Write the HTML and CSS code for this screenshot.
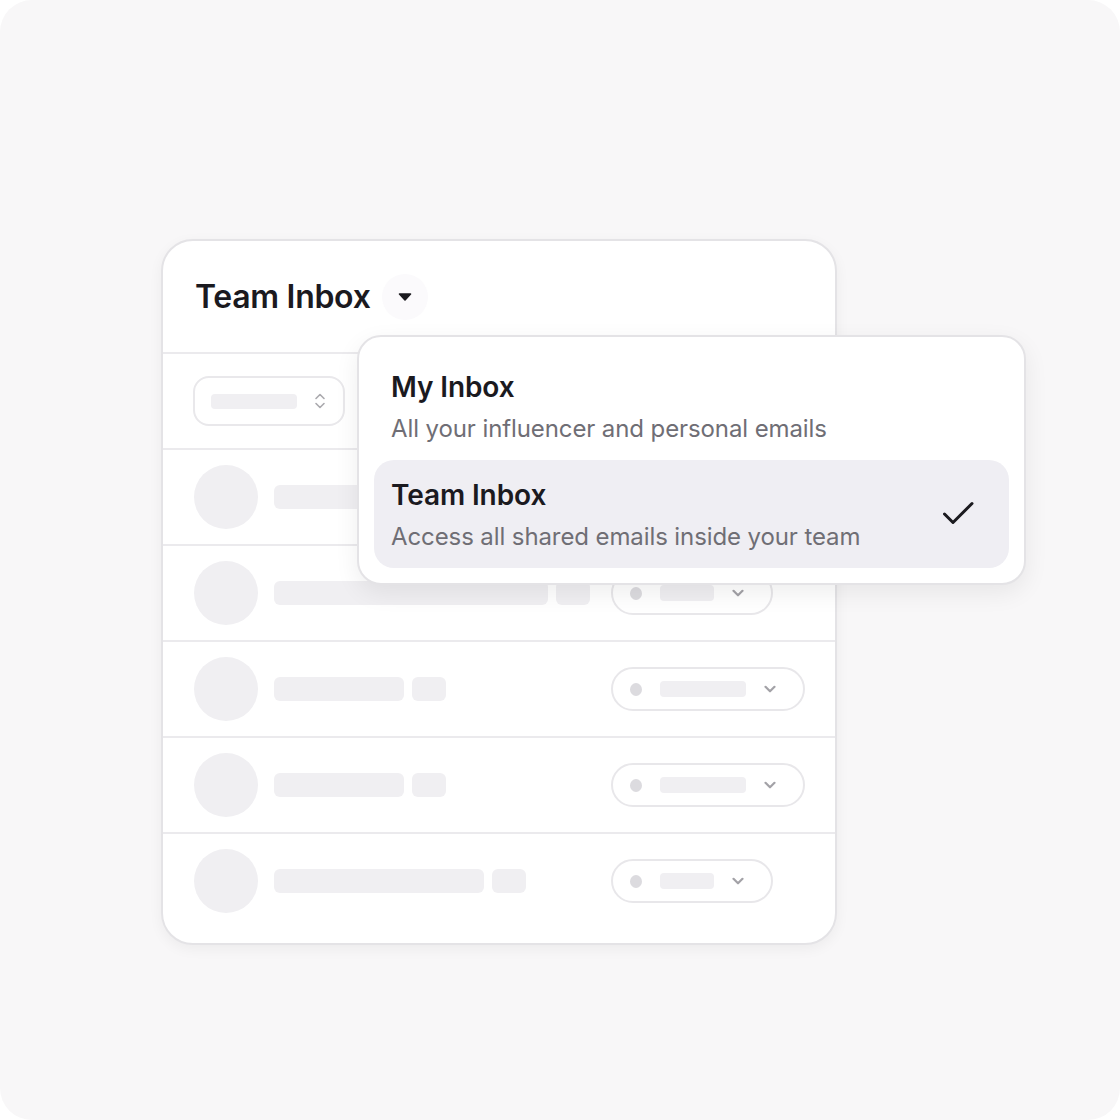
FILE: index.html
```html
<!DOCTYPE html>
<html lang="en">
<head>
  <meta charset="UTF-8">
  <title>Team Inbox</title>
  <link rel="stylesheet" href="styles.css">
</head>
<body>
  <div class="cornice">
    <div class="scheda">
      <div class="testata">
        <h1>Team Inbox</h1>
        <span class="apri">
          <svg width="16" height="10" viewBox="0 0 16 10"><path d="M2.5 2h11L8 8z" fill="#1b1a1f" stroke="#1b1a1f" stroke-width="1.6" stroke-linejoin="round"/></svg>
        </span>
      </div>

      <div class="filtri">
        <div class="selettore">
          <span class="barra-sel"></span>
          <svg width="14" height="20" viewBox="0 0 14 20"><path d="M3 7.5l4-4 4 4M3 12.5l4 4 4-4" fill="none" stroke="#aaa9ae" stroke-width="1.6" stroke-linecap="round" stroke-linejoin="round"/></svg>
        </div>
      </div>

      <div class="riga">
        <span class="avatar"></span>
        <span class="nome" style="width: 210px"></span>
        <span class="tag"></span>
        <div class="stato"><span class="punto"></span><span class="barra-stato" style="width: 54px"></span><svg class="freccia" width="12" height="8" viewBox="0 0 12 8"><path d="M1.5 1.8L6 6.3l4.5-4.5" fill="none" stroke="#a3a2a7" stroke-width="2.2" stroke-linecap="round" stroke-linejoin="round"/></svg></div>
      </div>
      <div class="riga">
        <span class="avatar"></span>
        <span class="nome" style="width: 274px"></span>
        <span class="tag"></span>
        <div class="stato"><span class="punto"></span><span class="barra-stato" style="width: 54px"></span><svg class="freccia" width="12" height="8" viewBox="0 0 12 8"><path d="M1.5 1.8L6 6.3l4.5-4.5" fill="none" stroke="#a3a2a7" stroke-width="2.2" stroke-linecap="round" stroke-linejoin="round"/></svg></div>
      </div>
      <div class="riga">
        <span class="avatar"></span>
        <span class="nome" style="width: 130px"></span>
        <span class="tag"></span>
        <div class="stato"><span class="punto"></span><span class="barra-stato" style="width: 86px"></span><svg class="freccia" width="12" height="8" viewBox="0 0 12 8"><path d="M1.5 1.8L6 6.3l4.5-4.5" fill="none" stroke="#a3a2a7" stroke-width="2.2" stroke-linecap="round" stroke-linejoin="round"/></svg></div>
      </div>
      <div class="riga">
        <span class="avatar"></span>
        <span class="nome" style="width: 130px"></span>
        <span class="tag"></span>
        <div class="stato"><span class="punto"></span><span class="barra-stato" style="width: 86px"></span><svg class="freccia" width="12" height="8" viewBox="0 0 12 8"><path d="M1.5 1.8L6 6.3l4.5-4.5" fill="none" stroke="#a3a2a7" stroke-width="2.2" stroke-linecap="round" stroke-linejoin="round"/></svg></div>
      </div>
      <div class="riga">
        <span class="avatar"></span>
        <span class="nome" style="width: 210px"></span>
        <span class="tag"></span>
        <div class="stato"><span class="punto"></span><span class="barra-stato" style="width: 54px"></span><svg class="freccia" width="12" height="8" viewBox="0 0 12 8"><path d="M1.5 1.8L6 6.3l4.5-4.5" fill="none" stroke="#a3a2a7" stroke-width="2.2" stroke-linecap="round" stroke-linejoin="round"/></svg></div>
      </div>

      <!-- menu aperto sopra la lista -->
      <div class="menu">
        <div class="voce">
          <div class="testi">
            <div class="titolo">My Inbox</div>
            <div class="sotto">All your influencer and personal emails</div>
          </div>
        </div>
        <div class="voce attiva">
          <div class="testi">
            <div class="titolo">Team Inbox</div>
            <div class="sotto">Access all shared emails inside your team</div>
          </div>
          <svg class="spunta" width="34" height="34" viewBox="0 0 34 34"><path d="M3.5 17l8.5 8.5L31 6.5" fill="none" stroke="#1b1a1f" stroke-width="3" stroke-linecap="round" stroke-linejoin="round"/></svg>
        </div>
      </div>
    </div>
  </div>
</body>
</html>
```

FILE: styles.css
```css
:root {
  --sfondo: #f8f7f8;
  --bordo: #e4e3e6;
  --linea: #ebeaed;
  --grigio: #f0eff2;
  --testo: #1b1a1f;
  --testoTenue: #6f6e75;
}

* {
  box-sizing: border-box;
  margin: 0;
  padding: 0;
}

body {
  background: #ffffff;
  font-family: 'Inter', 'Noto Sans', sans-serif;
  color: var(--testo);
}

.cornice {
  width: 1120px;
  height: 1120px;
  background: var(--sfondo);
  border-radius: 32px;
  padding: 239px 0 0 161px;
}

.scheda {
  position: relative;
  width: 676px;
  height: 706px;
  background: #fff;
  border: 2px solid var(--bordo);
  border-radius: 32px;
  box-shadow: 0 4px 14px rgba(0, 0, 0, 0.05);
}

.testata {
  height: 111px;
  display: flex;
  align-items: center;
  gap: 11px;
  padding-left: 32px;
}

.testata h1 {
  font-size: 32px;
  font-weight: 600;
  letter-spacing: -0.3px;
}

.apri {
  width: 46px;
  height: 46px;
  border-radius: 50%;
  background: #fbfafc;
  display: flex;
  align-items: center;
  justify-content: center;
}

.filtri {
  height: 96px;
  border-top: 2px solid var(--linea);
  display: flex;
  align-items: center;
  padding-left: 30px;
}

.selettore {
  width: 152px;
  height: 50px;
  border: 2px solid #e9e8eb;
  border-radius: 16px;
  display: flex;
  align-items: center;
  padding: 0 16px;
  justify-content: space-between;
}

.barra-sel {
  width: 86px;
  height: 15px;
  border-radius: 4px;
  background: var(--grigio);
}

.riga {
  height: 96px;
  border-top: 2px solid var(--linea);
  display: flex;
  align-items: center;
  padding: 0 30px 0 31px;
}

.avatar {
  width: 64px;
  height: 64px;
  border-radius: 50%;
  background: var(--grigio);
  margin-right: 16px;
}

.nome {
  height: 24px;
  border-radius: 6px;
  background: var(--grigio);
  margin-right: 8px;
}

.tag {
  width: 34px;
  height: 24px;
  border-radius: 6px;
  background: var(--grigio);
}

.stato {
  margin-left: auto;
  height: 44px;
  border: 2px solid #e8e7ea;
  border-radius: 22px;
  display: flex;
  align-items: center;
  gap: 18px;
  padding: 0 27px 0 17px;
}

.riga:nth-child(4) .stato,
.riga:nth-child(7) .stato {
  margin-right: 32px;
}

.punto {
  width: 12px;
  height: 13px;
  border-radius: 50%;
  background: #dcdbdf;
}

.barra-stato {
  height: 16px;
  border-radius: 4px;
  background: var(--grigio);
}

.menu {
  position: absolute;
  left: 194px;
  top: 94px;
  width: 669px;
  background: #fff;
  border: 2px solid var(--bordo);
  border-radius: 24px;
  padding: 15px;
  box-shadow: 0 8px 24px rgba(0, 0, 0, 0.07);
}

.voce {
  height: 108px;
  border-radius: 20px;
  display: flex;
  align-items: center;
  padding: 0 34px 0 17px;
}

.voce.attiva {
  background: #efeef3;
}

.testi {
  flex: 1;
  padding-top: 1px;
}

.titolo {
  font-size: 28px;
  font-weight: 600;
  line-height: 32px;
  letter-spacing: -0.1px;
  margin-bottom: 12px;
}

.sotto {
  font-size: 24px;
  line-height: 28px;
  letter-spacing: -0.1px;
  color: var(--testoTenue);
}
```
